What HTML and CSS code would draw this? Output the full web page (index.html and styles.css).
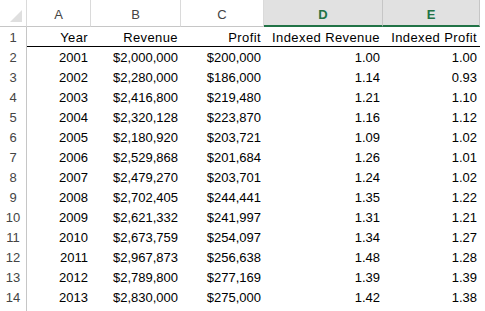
FILE: index.html
```html
<!DOCTYPE html>
<html lang="en">
<head>
    <meta charset="UTF-8">
    <title>Indexed Revenue and Profit</title>
    <link rel="stylesheet" href="styles.css">
</head>
<body>
    <div class="sheet">
        <!-- column headers -->
        <div class="corner"><span class="corner-tri"></span></div>
        <div class="col-head">A</div>
        <div class="col-head">B</div>
        <div class="col-head">C</div>
        <div class="col-head selected">D</div>
        <div class="col-head selected">E</div>

        <!-- row 1: titles -->
        <div class="row-head">1</div>
        <div class="cell title">Year</div>
        <div class="cell title">Revenue</div>
        <div class="cell title">Profit</div>
        <div class="cell title">Indexed Revenue</div>
        <div class="cell title">Indexed Profit</div>

        <div class="row-head">2</div><div class="cell">2001</div><div class="cell">$2,000,000</div><div class="cell">$200,000</div><div class="cell">1.00</div><div class="cell">1.00</div>
        <div class="row-head">3</div><div class="cell">2002</div><div class="cell">$2,280,000</div><div class="cell">$186,000</div><div class="cell">1.14</div><div class="cell">0.93</div>
        <div class="row-head">4</div><div class="cell">2003</div><div class="cell">$2,416,800</div><div class="cell">$219,480</div><div class="cell">1.21</div><div class="cell">1.10</div>
        <div class="row-head">5</div><div class="cell">2004</div><div class="cell">$2,320,128</div><div class="cell">$223,870</div><div class="cell">1.16</div><div class="cell">1.12</div>
        <div class="row-head">6</div><div class="cell">2005</div><div class="cell">$2,180,920</div><div class="cell">$203,721</div><div class="cell">1.09</div><div class="cell">1.02</div>
        <div class="row-head">7</div><div class="cell">2006</div><div class="cell">$2,529,868</div><div class="cell">$201,684</div><div class="cell">1.26</div><div class="cell">1.01</div>
        <div class="row-head">8</div><div class="cell">2007</div><div class="cell">$2,479,270</div><div class="cell">$203,701</div><div class="cell">1.24</div><div class="cell">1.02</div>
        <div class="row-head">9</div><div class="cell">2008</div><div class="cell">$2,702,405</div><div class="cell">$244,441</div><div class="cell">1.35</div><div class="cell">1.22</div>
        <div class="row-head">10</div><div class="cell">2009</div><div class="cell">$2,621,332</div><div class="cell">$241,997</div><div class="cell">1.31</div><div class="cell">1.21</div>
        <div class="row-head">11</div><div class="cell">2010</div><div class="cell">$2,673,759</div><div class="cell">$254,097</div><div class="cell">1.34</div><div class="cell">1.27</div>
        <div class="row-head">12</div><div class="cell">2011</div><div class="cell">$2,967,873</div><div class="cell">$256,638</div><div class="cell">1.48</div><div class="cell">1.28</div>
        <div class="row-head">13</div><div class="cell">2012</div><div class="cell">$2,789,800</div><div class="cell">$277,169</div><div class="cell">1.39</div><div class="cell">1.39</div>
        <div class="row-head">14</div><div class="cell">2013</div><div class="cell">$2,830,000</div><div class="cell">$275,000</div><div class="cell">1.42</div><div class="cell">1.38</div>
        <div class="row-head last"></div>
    </div>
</body>
</html>
```

FILE: styles.css
```css
/* base */
body { margin: 0; background: #fff; font-family: "Liberation Sans", Arial, sans-serif; font-size: 13px; color: #000; }

/* sheet grid: row header + columns A-E */
.sheet { display: grid; grid-template-columns: 27px 64px 90px 83px 119px 97px; grid-template-rows: 27px repeat(14, 20px) 10px; width: 480px; }

/* column headers */
.corner, .col-head { box-sizing: border-box; border-right: 1px solid #dadada; border-bottom: 1px solid #c6c6c6; background: #fff; }
.corner { position: relative; }
.corner-tri { position: absolute; right: 4px; bottom: 4px; width: 0; height: 0; border-left: 12px solid transparent; border-bottom: 12px solid #dfdfdf; }
.col-head { display: flex; align-items: center; justify-content: center; padding-top: 3px; color: #444; font-size: 13px; }
.col-head.selected { background: #e1e1e1; color: #217346; font-weight: bold; border-bottom: 2px solid #217346; border-right-color: #c6c6c6; }

/* row headers */
.row-head { box-sizing: border-box; border-right: 1px solid #c6c6c6; display: flex; align-items: center; justify-content: center; color: #444; font-size: 13px; padding-top: 1px; }

/* cells */
.cell { box-sizing: border-box; display: flex; align-items: center; justify-content: flex-end; padding: 1px 3px 0 0; white-space: nowrap; }
.cell.title { border-bottom: 1px solid #000; padding-top: 2px; letter-spacing: 0.4px; }
.cell.title:last-child { margin-right: 2px; }
```
